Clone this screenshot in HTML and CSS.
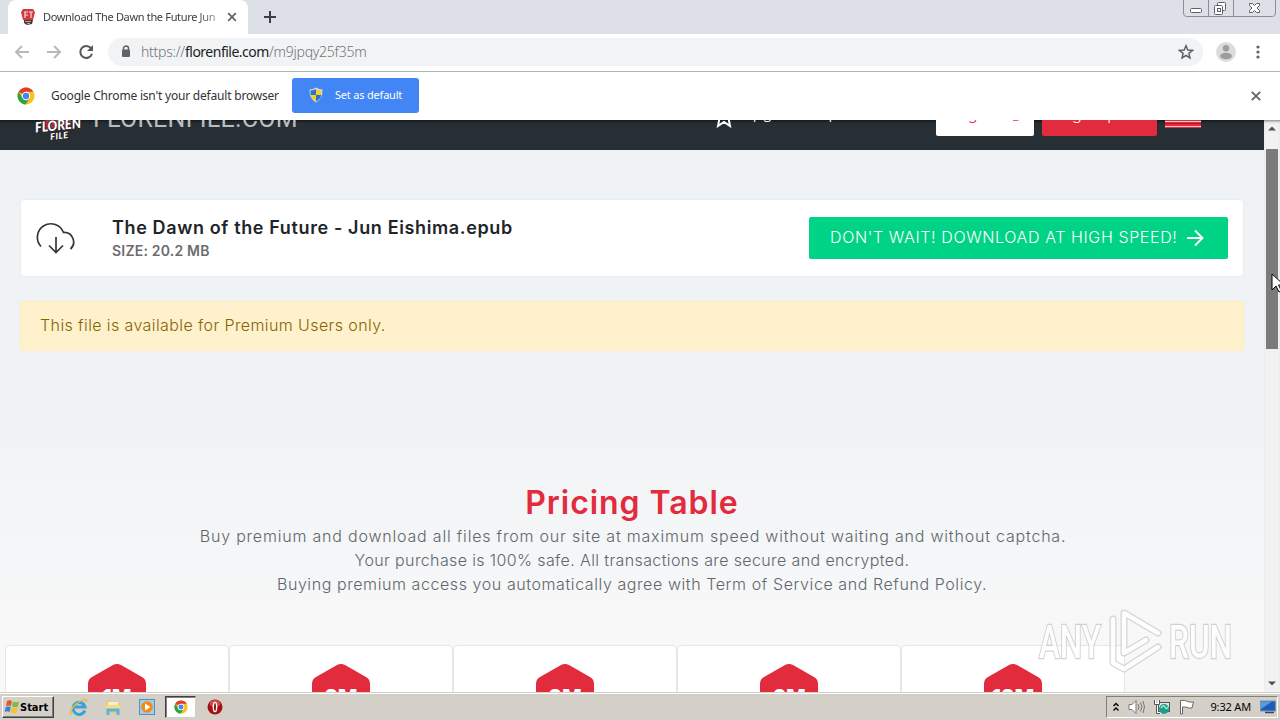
FILE: index.html
```html
<!DOCTYPE html>
<html>
<head>
  <meta charset="utf-8">
  <meta name="viewport" content="width=device-width">
  <title>Download The Dawn the Future Jun</title>
  <link rel="stylesheet" href="styles.css">
</head>
<body>
  <div class="screen">

    <!-- tab strip -->
    <div class="tab_strip">
      <div class="tab">
        <svg class="favicon" width="16" height="18" viewBox="0 0 16 18">
          <path d="M3 1h10l2 3-2 8H3L1 4z" fill="#d33a3f"/>
          <path d="M4 4h4M5 4v6M5 7h3M9 4h4M11 4v6" stroke="#f6dcdc" stroke-width="1.200" fill="none"/>
          <path d="M4 12h9l-1 4-5 1-3-2z" fill="#493536"/>
          <path d="M5 13.500h6M7 15.500h3" stroke="#b9a6a6"/>
        </svg>
        <span class="tab_title">Download The Dawn the Future Jun</span>
        <svg width="10" height="10" viewBox="0 0 10 10"><path d="M1.200 1.200l7.600 7.600M8.800 1.200L1.200 8.800" stroke="#5f6368" stroke-width="1.700"/></svg>
      </div>
      <svg class="new_tab" width="12" height="12" viewBox="0 0 12 12"><path d="M6 0v12M0 6h12" stroke="#3c4043" stroke-width="2"/></svg>
      <div class="window_buttons">
        <svg width="97" height="17" viewBox="0 0 97 17">
          <path d="M.5 0v13q0 3.500 3 3.500h86q3 0 3-3.500V0M25.500 0v16M50.500 0v16" fill="none" stroke="#8b8e96"/>
          <rect x="7.500" y="8.500" width="11" height="4" rx="1" fill="#fff" stroke="#5c6068"/>
          <rect x="34.500" y="2.500" width="8" height="8" rx="1" fill="#fff" stroke="#5c6068"/>
          <rect x="31.500" y="5.500" width="8" height="9" rx="1" fill="#fff" stroke="#5c6068"/>
          <rect x="34.500" y="8.500" width="3" height="3" fill="#fff" stroke="#5c6068"/>
          <path d="M66.500 3.500h3l2 2 2-2h3v2l-2.500 2.500 2.500 2.500v2h-3l-2-2-2 2h-3v-2L69 8l-2.500-2.500z" fill="#fff" stroke="#5c6068"/>
        </svg>
      </div>
    </div>

    <!-- toolbar -->
    <div class="toolbar">
      <svg class="nav_icon" width="16" height="16" viewBox="0 0 16 16"><path d="M15 8H2M8 2L2 8l6 6" fill="none" stroke="#b7b9bc" stroke-width="2"/></svg>
      <svg class="nav_icon" width="16" height="16" viewBox="0 0 16 16"><path d="M1 8h13M8 2l6 6-6 6" fill="none" stroke="#b7b9bc" stroke-width="2"/></svg>
      <svg class="nav_icon" width="16" height="16" viewBox="0 0 16 16"><path d="M13 4.200A6 6 0 1 0 14 9.800" fill="none" stroke="#55585c" stroke-width="2"/><path d="M15 1v6H9z" fill="#55585c"/></svg>
      <div class="address">
        <svg width="10" height="13" viewBox="0 0 10 13"><path d="M2.500 5V3.500a2.500 2.500 0 0 1 5 0V5" fill="none" stroke="#5f6368" stroke-width="1.500"/><rect x="1" y="4.500" width="8" height="7.500" rx="1" fill="#5f6368"/></svg>
        <div class="url">https://<b>florenfile.com</b>/m9jpqy25f35m</div>
        <svg width="16" height="16" viewBox="0 0 16 16"><path d="M8 1.700l1.800 4.300 4.700.4-3.600 3 1.100 4.600L8 11.500 4 14l1.100-4.600-3.600-3 4.700-.4z" fill="none" stroke="#5f6368" stroke-width="1.500"/></svg>
      </div>
      <svg class="avatar" width="20" height="20" viewBox="0 0 20 20"><circle cx="10" cy="10" r="10" fill="#dcdcdc"/><circle cx="10" cy="6.300" r="3.200" fill="#9d9d9d"/><ellipse cx="10" cy="14" rx="6" ry="3.200" fill="#9d9d9d"/></svg>
      <svg width="4" height="16" viewBox="0 0 4 16" fill="#5f6368"><circle cx="2" cy="3" r="1.600"/><circle cx="2" cy="8" r="1.600"/><circle cx="2" cy="13" r="1.600"/></svg>
    </div>

    <div class="info_bar">
      <svg width="18" height="18" viewBox="0 0 18 18">
        <circle cx="9" cy="9" r="8.500" fill="#fbc116"/>
        <path d="M9 9L1.640 4.750A8.500 8.500 0 0 1 16.360 4.750H9z" fill="#e33b2e"/>
        <path d="M1.640 4.750A8.500 8.500 0 0 0 8.700 17.500L12.600 11 9 9 5.400 11z" fill="#2ba24c"/>
        <circle cx="9" cy="9" r="4.200" fill="#fff"/><circle cx="9" cy="9" r="3.200" fill="#4285f4"/>
      </svg>
      <span class="info_text">Google Chrome isn't your default browser</span>
      <div class="default_button">
        <svg width="14" height="16" viewBox="0 0 14 16">
          <path d="M7 .5Q10 2.500 13.500 2.500 14 11.500 7 15.500 0 11.500.5 2.500 4 2.500 7 .5z" fill="#d7dde0"/>
          <path d="M7 2v6H1.600L1.500 3.500Q5 3.300 7 2zM7 8h5.400Q11.500 12 7 14.500z" fill="#2b73c7"/>
          <path d="M7 2v6h5.400l.1-4.500Q9 3.300 7 2zM7 8H1.600Q2.500 12 7 14.500z" fill="#f6cf2d"/>
        </svg>
        <span>Set as default</span>
      </div>
      <svg class="info_close" width="10" height="10" viewBox="0 0 10 10"><path d="M.8.8l8.400 8.400M9.200.8L.8 9.200" stroke="#5f6368" stroke-width="1.800"/></svg>
    </div>

    <!-- page -->
    <div class="viewport">
      <div class="page">
        <div class="site_header">
          <svg class="site_logo" width="50" height="38" viewBox="0 0 50 38">
            <path d="M8 0h32l-3 22-25 4z" fill="#b32c38"/>
            <g transform="rotate(-6 25 22)" font-family="Lato" font-weight="900" font-style="italic" fill="#fff" stroke="#2a2328" stroke-width="1.500" paint-order="stroke">
              <text x="1" y="26" font-size="14" textLength="46" lengthAdjust="spacingAndGlyphs">FLOREN</text>
              <text x="15" y="35" font-size="9" textLength="18">FILE</text>
            </g>
          </svg>
          <span class="site_name">FLORENFILE.COM</span>
          <svg class="site_star" width="16" height="18" viewBox="0 0 16 18"><path d="M1 4l2.500 4L2 16l6-4 6 4-1.500-8L15 4" fill="none" stroke="#fff" stroke-width="2"/></svg>
          <span class="upgrade">Upgrade to premium</span>
          <div class="site_button login">Login<svg width="16" height="16" viewBox="0 0 16 16"><path d="M8 2h6v10q0 2-2 2H8M1 8h9M6 4l4 4-4 4" fill="none" stroke="#cd3256" stroke-width="1.500"/></svg></div>
          <div class="site_button sign_up">Sign Up<svg width="16" height="16" viewBox="0 0 16 16"><path d="M2 14V4h4M14 14V4h-4" fill="none" stroke="#fff" stroke-width="1.300"/></svg></div>
          <div class="menu"></div>
        </div>

        <div class="file_card">
          <svg width="40" height="34" viewBox="0 0 40 34"><path d="M5 25.500A13.500 13.500 0 1 1 27.500 11.500 9.500 9.500 0 0 1 34.500 28M20 16v16M13 24.500l7 7 7-7" fill="none" stroke="#34373a" stroke-width="1.700"/></svg>
          <div class="file_info">
            <div class="file_name">The Dawn of the Future - Jun Eishima.epub</div>
            <div class="file_size">SIZE: 20.2 MB</div>
          </div>
          <div class="download_button">
            <span>DON'T WAIT! DOWNLOAD AT HIGH SPEED!</span>
            <svg width="18" height="18" viewBox="0 0 18 18"><path d="M1 9h15M9 1.500L16.500 9 9 16.500" fill="none" stroke="#fff" stroke-width="1.900"/></svg>
          </div>
        </div>

        <div class="alert">This file is available for Premium Users only.</div>

        <div class="pricing">
          <div class="pricing_title">Pricing Table</div>
          <div class="pricing_text line_1">Buy premium and download all files from our site at maximum speed without waiting and without captcha.</div>
          <div class="pricing_text line_2">Your purchase is 100% safe. All transactions are secure and encrypted.</div>
          <div class="pricing_text line_3">Buying premium access you automatically agree with Term of Service and Refund Policy.</div>
          <div class="plans">
            <div class="plan"><div class="badge"><svg width="60" height="68" viewBox="0 0 60 68"><path d="M26 2q4-2 8 0l21 12q4 2 4 7v26q0 5-4 7L34 66q-4 2-8 0L5 54q-4-2-4-7V21q0-5 4-7z" fill="#e22b3d"/></svg><b>1M</b></div></div>
            <div class="plan"><div class="badge"><svg width="60" height="68" viewBox="0 0 60 68"><path d="M26 2q4-2 8 0l21 12q4 2 4 7v26q0 5-4 7L34 66q-4 2-8 0L5 54q-4-2-4-7V21q0-5 4-7z" fill="#e22b3d"/></svg><b>2M</b></div></div>
            <div class="plan"><div class="badge"><svg width="60" height="68" viewBox="0 0 60 68"><path d="M26 2q4-2 8 0l21 12q4 2 4 7v26q0 5-4 7L34 66q-4 2-8 0L5 54q-4-2-4-7V21q0-5 4-7z" fill="#e22b3d"/></svg><b>3M</b></div></div>
            <div class="plan"><div class="badge"><svg width="60" height="68" viewBox="0 0 60 68"><path d="M26 2q4-2 8 0l21 12q4 2 4 7v26q0 5-4 7L34 66q-4 2-8 0L5 54q-4-2-4-7V21q0-5 4-7z" fill="#e22b3d"/></svg><b>6M</b></div></div>
            <div class="plan"><div class="badge"><svg width="60" height="68" viewBox="0 0 60 68"><path d="M26 2q4-2 8 0l21 12q4 2 4 7v26q0 5-4 7L34 66q-4 2-8 0L5 54q-4-2-4-7V21q0-5 4-7z" fill="#e22b3d"/></svg><b>12M</b></div></div>
          </div>
        </div>
      </div>

      <div class="scrollbar">
        <svg width="8" height="5" viewBox="0 0 8 5"><path d="M0 4.500L4 .5l4 4z" fill="#505050"/></svg>
        <div class="thumb"></div>
        <svg class="down" width="8" height="5" viewBox="0 0 8 5"><path d="M0 .5l4 4 4-4z" fill="#505050"/></svg>
      </div>
    </div>

    <!-- taskbar -->
    <div class="taskbar">
      <div class="start">
        <svg width="16" height="16" viewBox="0 0 16 16">
          <path d="M3 2q2.500-1.500 5 0L7 7Q4.500 6 2 7z" fill="#e8582c"/>
          <path d="M9 2.500q3 1.500 6 0L14 7.500q-3 1.500-6 0z" fill="#7dbb42"/>
          <path d="M1.700 8q2.500-1 5 0l-1 5q-2.500-1.500-5 0z" fill="#3b7fd0"/>
          <path d="M7.700 8.500q3 1.500 6 0l-1 5q-3 1.500-6 0z" fill="#f6c12b"/>
        </svg>
        <span>Start</span>
      </div>
      <div class="task">
        <svg width="18" height="18" viewBox="0 0 18 18"><path d="M14.800 12.500A6 6 0 1 1 15 9H5" fill="none" stroke="#39a1dc" stroke-width="3"/><path d="M2 15.500C-1 18 0 11 6 6s12-6 10-2" fill="none" stroke="#e8bd38" stroke-width="1.500"/></svg>
      </div>
      <div class="task">
        <svg width="16" height="17" viewBox="0 0 16 17"><path d="M1 2h5l1 2h8v10H1z" fill="#e9cb68"/><path d="M3 3h10v4H3z" fill="#f8f1c8"/><path d="M1 6h14v5H1z" fill="#f3dc86"/><path d="M3 16v-5h10v5" fill="none" stroke="#5fb1de" stroke-width="3"/></svg>
      </div>
      <div class="task">
        <svg width="16" height="16" viewBox="0 0 16 16"><rect x=".5" y=".5" width="15" height="15" fill="#a5cbe5" stroke="#4c92c3"/><circle cx="8" cy="8" r="5.800" fill="#f08a18"/><path d="M6 4.500l5.500 3.500L6 11.500z" fill="#fff"/></svg>
      </div>
      <div class="task active">
        <svg width="14" height="14" viewBox="0 0 18 18">
          <circle cx="9" cy="9" r="8.500" fill="#fbc116"/>
          <path d="M9 9L1.640 4.750A8.500 8.500 0 0 1 16.360 4.750H9z" fill="#e33b2e"/>
          <path d="M1.640 4.750A8.500 8.500 0 0 0 8.700 17.500L12.600 11 9 9 5.400 11z" fill="#2ba24c"/>
          <circle cx="9" cy="9" r="4.200" fill="#fff"/><circle cx="9" cy="9" r="3.200" fill="#4285f4"/>
        </svg>
      </div>
      <div class="task">
        <svg width="16" height="16" viewBox="0 0 16 16"><circle cx="8" cy="8" r="7.500" fill="#a90f12"/><ellipse cx="8" cy="4.500" rx="5.500" ry="3.500" fill="#cf4a45"/><ellipse cx="8" cy="8" rx="2.400" ry="5.300" fill="#fff"/><ellipse cx="8" cy="8" rx="1" ry="4" fill="#8d1a1a"/></svg>
      </div>
      <div class="tray">
        <svg width="6" height="10" viewBox="0 0 6 10"><path d="M.5 4L3 1.500 5.500 4M.5 8.500L3 6l2.500 2.500" fill="none" stroke="#000" stroke-width="1.400"/></svg>
        <svg width="17" height="16" viewBox="0 0 17 16"><path d="M1 5.500h3l4-4v13l-4-4H1z" fill="#fff" stroke="#777"/><path d="M10 5q2 3 0 6M12.500 3.500q3 4.500 0 9M15 2q3 6 0 12" fill="none" stroke="#777"/></svg>
        <svg width="16" height="16" viewBox="0 0 16 16"><rect x="4.500" y="3.500" width="11" height="9" fill="#dce8ea" stroke="#555"/><path d="M1 1v4h4V1M3 5v9h4" fill="none" stroke="#fff" stroke-width="2"/><path d="M.5 1v4.500h5V1M2.500 6v8.500H6" fill="none" stroke="#555"/><circle cx="10" cy="10" r="5" fill="#209c8b"/><path d="M7 9q3-4 4-1t3 0" fill="none" stroke="#9be3c4" stroke-width="1.500"/></svg>
        <svg width="16" height="16" viewBox="0 0 16 16"><path d="M1.500 15V1.500q4-1 7 1 3 1 6 .5L13 9q-3 .5-5-.5-2-.8-4.500-.5V15z" fill="#fff" stroke="#666"/></svg>
        <span class="clock">9:32 AM</span>
        <svg width="16" height="14" viewBox="0 0 16 14"><rect x=".5" y="1" width="15" height="10" fill="#1f5cb8" stroke="#7895b5"/><path d="M1 1.500h11L1 9z" fill="#559be2"/><path d="M5 12.500h9" stroke="#37475b" stroke-width="1.500"/></svg>
      </div>
    </div>

    <div class="watermark">
      <svg width="200" height="70" viewBox="0 0 200 70">
        <g fill="#fff" stroke="#c8c8c8" stroke-width="2.500" paint-order="stroke" font-family="Roboto" font-size="46" font-weight="500">
          <text x="3" y="52" textLength="62" lengthAdjust="spacingAndGlyphs">ANY</text>
          <text x="133" y="52" textLength="63" lengthAdjust="spacingAndGlyphs">RUN</text>
        </g>
        <g fill="none" stroke-linejoin="round" stroke-linecap="round">
          <path d="M88 47V7l34 20M77 13v44l11 6 34-22M88 47l22-13" stroke="#cbcbcb" stroke-width="7"/>
          <path d="M88 47V7l34 20M77 13v44l11 6 34-22M88 47l22-13" stroke="#fff" stroke-width="4.500"/>
        </g>
      </svg>
    </div>
    <svg class="cursor" width="12" height="20" viewBox="0 0 12 20"><path d="M1 1v16l4-4 3 6 2.500-1-3-6H13z" fill="#fff" stroke="#000"/></svg>
  </div>
</body>
</html>
```
FILE: styles.css
```css
*{
    box-sizing: border-box;
}

body{
    margin: 0;
    font-family: "Noto Sans", sans-serif;
}

svg{
    display: block;
    flex: none;
}

.screen{
    position: relative;
    width: 1280px;
    height: 720px;
    overflow: hidden;
    display: flex;
    flex-direction: column;
    white-space: nowrap;
}

.tab_strip{
    height: 34px;
    display: flex;
    background-color: #dde0e7;
}

.tab{
    width: 240px;
    margin-left: 8px;
    padding: 0 11px 0 12px;
    display: flex;
    align-items: center;
    background-color: #fff;
    border-radius: 8px 8px 0 0;
}

.tab_title{
    width: 174px;
    margin: 0 10px 2px 7px;
    font-size: 11px;
    letter-spacing: -0.33px;
    color: #3c4043;
    -webkit-mask-image: linear-gradient(to right, #000 88%, #0007);
}

.new_tab{
    margin: 11px 0 0 16px;
}

.window_buttons{
    margin-left: auto;
}

.toolbar{
    height: 38px;
    padding: 0 20px 2px 14px;
    display: flex;
    align-items: center;
    background-color: #fff;
    border-bottom: 1px solid #b4b6b6;
}

.nav_icon{
    margin-right: 16px;
}

.address{
    flex: 1;
    height: 28px;
    margin-right: 13px;
    margin-left: -2px;
    padding: 0 9px 0 13px;
    display: flex;
    align-items: center;
    border-radius: 14px;
    background-color: #f1f3f4;
}

.url{
    flex: 1;
    margin-left: 10px;
    font-size: 14px;
    font-weight: 300;
    letter-spacing: -0.25px;
    color: #6f757a;
}

.url b{
    font-weight: normal;
    letter-spacing: -0.5px;
    color: #202124;
}

.avatar{
    margin-right: 20px;
}

.info_bar{
    height: 48px;
    padding: 0 19px 1px 17px;
    display: flex;
    align-items: center;
    background-color: #fff;
}

.info_text{
    width: 228px;
    margin: 0 13px 1px 16px;
    font-size: 12px;
    letter-spacing: -0.2px;
    color: #333;
}

.default_button{
    width: 127px;
    height: 35px;
    padding: 0 0 2px 17px;
    display: flex;
    align-items: center;
    gap: 12px;
    border-radius: 3px;
    background-color: #4285f4;
    color: #fff;
    font-size: 11px;
    letter-spacing: -0.2px;
}

.info_close{
    margin-left: auto;
}

.viewport{
    height: 572px;
    display: flex;
    overflow: hidden;
}

.page{
    width: 1264px;
    overflow: hidden;
    font-family: Inter, sans-serif;
    background: linear-gradient(#f0f3f6 300px, #f8f8f8 520px);
}

.site_header{
    height: 30px;
    padding: 0 63px 0 34px;
    display: flex;
    align-items: flex-end;
    overflow: hidden;
    background-color: #272f35;
    box-shadow: inset 0 3px 3px -2px #111;
    color: #fff;
}

.site_logo{
    margin-bottom: 8px;
}

.site_name{
    width: 206px;
    margin-left: 9px;
    padding-bottom: 18px;
    font-family: Roboto, sans-serif;
    font-size: 25px;
    line-height: 26px;
    letter-spacing: 0.25px;
    color: #b9bdc0;
}

.site_star{
    margin: 0 9px 22px auto;
}

.upgrade{
    width: 195px;
    padding-bottom: 25px;
    font-size: 16px;
    line-height: 24px;
    font-weight: 300;
}

.site_button{
    height: 42px;
    width: 98px;
    margin: 0 8px 14px 0;
    padding-bottom: 2px;
    display: flex;
    align-items: center;
    justify-content: center;
    gap: 14px;
    border-radius: 2px;
    font-size: 16px;
    font-weight: 300;
}

.login{
    color: #cd3256;
    background-color: #fff;
}

.sign_up{
    width: 115px;
    gap: 8px;
    background-color: #e22b3d;
}

.menu{
    width: 36px;
    height: 10px;
    margin-bottom: 22px;
    background: repeating-linear-gradient(to top, #e22b3d 0 1px, #ffc9c2 1px 2px, #e22b3d 2px 4px, #7d2c38 4px 5px);
}

.file_card{
    height: 78px;
    margin: 49px 20px 0;
    padding: 0 15px;
    display: flex;
    align-items: center;
    border: 1px solid #ececec;
    border-radius: 4px;
    background-color: #fff;
}

.file_info{
    margin-left: 36px;
    padding-top: 2px;
    line-height: 24px;
}

.file_name{
    font-size: 18px;
    font-weight: 600;
    letter-spacing: 0.63px;
    color: #212529;
}

.file_size{
    font-size: 14px;
    line-height: 22px;
    font-weight: 600;
    letter-spacing: 0.2px;
    color: #6c6c6c;
}

.download_button{
    width: 419px;
    height: 42px;
    margin-left: auto;
    padding: 0 24px 1px 21px;
    display: flex;
    align-items: center;
    justify-content: space-between;
    border-radius: 2px;
    background-color: #00d385;
    color: #fff;
    font-size: 16px;
    font-weight: 300;
    letter-spacing: 0.62px;
}

.download_button span{
    padding-bottom: 2px;
}

.alert{
    height: 50px;
    margin: 24px 20px 0;
    padding: 0 19px;
    line-height: 47px;
    border: 1px solid #ffeeba;
    border-radius: 3px;
    background-color: #fff1cc;
    color: #856404;
    font-size: 16px;
    font-weight: 300;
    letter-spacing: 0.4px;
}

.pricing{
    margin-top: 131px;
    text-align: center;
}

.pricing_title{
    height: 42px;
    line-height: 41px;
    font-size: 32px;
    font-weight: 600;
    letter-spacing: 0.95px;
    color: #e22b3d;
}

.pricing_text{
    height: 24px;
    line-height: 24px;
    font-size: 16px;
    font-weight: 300;
    color: #60666c;
}

.line_1{
    letter-spacing: 0.8px;
    padding-left: 2px;
}

.line_2{
    letter-spacing: 0.38px;
}

.line_3{
    letter-spacing: 0.58px;
}

.plans{
    height: 120px;
    margin: 49px 0 0 5px;
    display: flex;
}

.plan{
    width: 224px;
    padding-top: 17px;
    border: 1px solid #e6e6e6;
    border-radius: 4px;
    background-color: #fff;
}

.badge{
    display: grid;
    place-items: center;
}

.badge svg, .badge b{
    grid-area: 1 / 1;
}

.badge b{
    z-index: 1;
    color: #fff;
    font-size: 21px;
    font-weight: 800;
}

.scrollbar{
    width: 16px;
    display: flex;
    flex-direction: column;
    align-items: center;
    padding: 6px 0;
    background-color: #f1f1f1;
    box-shadow: inset 0 3px 3px -2px #777;
}

.thumb{
    width: 12px;
    height: 200px;
    margin-top: 18px;
    background-color: #7b7b7b;
}

.down{
    margin-top: auto;
}

.taskbar{
    height: 28px;
    padding: 1px 2px 0;
    display: flex;
    align-items: center;
    background-color: #d4d0c8;
    border-top: 1px solid #d4d0c8;
    box-shadow: inset 0 1px 0 #fff;
}

.start{
    width: 52px;
    height: 22px;
    margin-right: 9px;
    display: flex;
    align-items: center;
    padding-left: 1px;
    border: 1px solid #fff;
    border-right-color: #404040;
    border-bottom-color: #404040;
    box-shadow: inset -1px -1px 0 #808080;
    font-family: "DejaVu Sans Condensed", "DejaVu Sans", sans-serif;
    font-size: 11px;
    font-weight: bold;
}

.task{
    width: 31px;
    height: 22px;
    margin-right: 3px;
    display: flex;
    align-items: center;
    justify-content: center;
}

.active{
    background-color: #fff;
    border: 1px solid #404040;
    border-right-color: #d4d0c8;
    border-bottom-color: #d4d0c8;
    box-shadow: inset 1px 1px 0 #808080;
}

.tray{
    width: 172px;
    height: 22px;
    margin-left: auto;
    padding: 0 1px 0 6px;
    display: flex;
    align-items: center;
    justify-content: space-between;
    border: 1px solid #808080;
    border-right-color: #fff;
    border-bottom-color: #fff;
}

.clock{
    margin: 0 0 1px 7px;
    font-size: 11px;
    letter-spacing: -0.15px;
}

.watermark{
    position: absolute;
    left: 1036px;
    top: 606px;
    opacity: 0.8;
}

.cursor{
    position: absolute;
    left: 1271px;
    top: 273px;
}
```
